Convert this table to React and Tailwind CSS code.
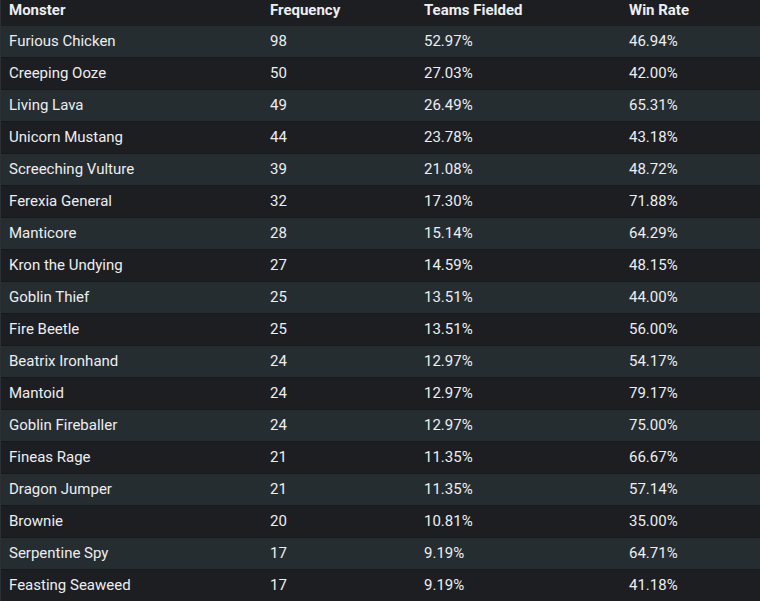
import React from "react";

const rows = [
  ["Furious Chicken", 98, "52.97%", "46.94%"],
  ["Creeping Ooze", 50, "27.03%", "42.00%"],
  ["Living Lava", 49, "26.49%", "65.31%"],
  ["Unicorn Mustang", 44, "23.78%", "43.18%"],
  ["Screeching Vulture", 39, "21.08%", "48.72%"],
  ["Ferexia General", 32, "17.30%", "71.88%"],
  ["Manticore", 28, "15.14%", "64.29%"],
  ["Kron the Undying", 27, "14.59%", "48.15%"],
  ["Goblin Thief", 25, "13.51%", "44.00%"],
  ["Fire Beetle", 25, "13.51%", "56.00%"],
  ["Beatrix Ironhand", 24, "12.97%", "54.17%"],
  ["Mantoid", 24, "12.97%", "79.17%"],
  ["Goblin Fireballer", 24, "12.97%", "75.00%"],
  ["Fineas Rage", 21, "11.35%", "66.67%"],
  ["Dragon Jumper", 21, "11.35%", "57.14%"],
  ["Brownie", 20, "10.81%", "35.00%"],
  ["Serpentine Spy", 17, "9.19%", "64.71%"],
  ["Feasting Seaweed", 17, "9.19%", "41.18%"],
];

const cols = "grid grid-cols-[260px_154px_205px_1fr]";

export default function App() {
  return (
    <div className="h-[601px] w-[760px] overflow-hidden bg-[#1d1e22] text-[#eceef0] text-[15px] font-['Roboto',sans-serif] border-l border-[#2c3034]">
      <div className={`${cols} h-[26px] items-start leading-[20px] font-bold`}>
        <div className="pl-[8px]">Monster</div>
        <div className="pl-[9px]">Frequency</div>
        <div className="pl-[9px]">Teams Fielded</div>
        <div className="pl-[9px]">Win Rate</div>
      </div>
      {rows.map((r, i) => (
        <div
          key={r[0]}
          className={`${cols} h-[32px] items-center border-b border-[#17181b] ${i % 2 === 0 ? "bg-[#262d31]" : "bg-[#1d1e22]"}`}
        >
          <div className="pl-[8px]">{r[0]}</div>
          <div className="pl-[9px]">{r[1]}</div>
          <div className="pl-[9px]">{r[2]}</div>
          <div className="pl-[9px]">{r[3]}</div>
        </div>
      ))}
    </div>
  );
}
